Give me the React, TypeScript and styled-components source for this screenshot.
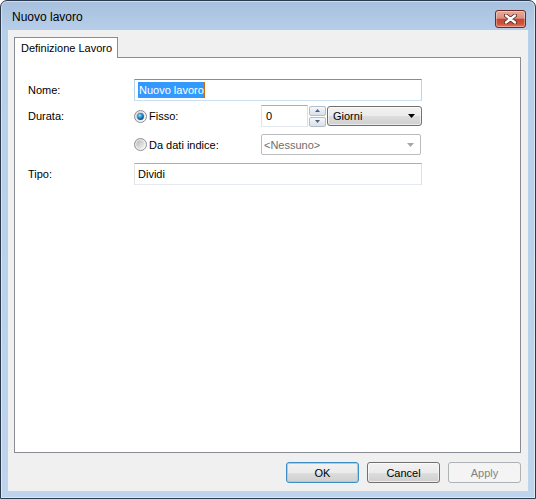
import React, { useId } from "react";
import styled, { createGlobalStyle } from "styled-components";

const GlobalStyle = createGlobalStyle`
  html, body {
    margin: 0;
    padding: 0;
    background: #ffffff;
    overflow: hidden;
  }
  * {
    box-sizing: border-box;
  }
`;

const Window = styled.div`
  width: 536px;
  height: 499px;
  display: flex;
  flex-direction: column;
  border: 1px solid #2b3a4c;
  border-radius: 7px 7px 0 0;
  background: linear-gradient(to bottom, #a6c0dd 0px, #b7cfe9 30px, #bdd4ec 100%);
  box-shadow: inset 0 0 0 1px rgba(255, 255, 255, 0.45);
  font-family: "Liberation Sans", Arial, sans-serif;
  font-size: 11px;
  color: #000;
`;

const TitleBar = styled.div`
  height: 29px;
  flex: none;
  display: flex;
  align-items: flex-start;
  justify-content: space-between;
`;

const Title = styled.div`
  padding: 9px 0 0 11px;
  font-size: 12px;
  line-height: 14px;
  color: #000;
`;

const CloseButton = styled.button`
  margin: 9px 9px 0 0;
  width: 31px;
  height: 18px;
  padding: 0;
  display: flex;
  align-items: center;
  justify-content: center;
  border: 1px solid #6a2a24;
  border-radius: 3px;
  background: linear-gradient(
    to bottom,
    #e9a999 0%,
    #dc8f7f 45%,
    #c5472f 52%,
    #cd543c 80%,
    #e27c5c 100%
  );
  box-shadow: inset 0 0 0 1px rgba(255, 255, 255, 0.35);
`;

const Body = styled.div`
  flex: 1;
  display: flex;
  padding: 0 7px 7px 7px;
`;

const Client = styled.div`
  flex: 1;
  display: flex;
  flex-direction: column;
  background: #f0f0f0;
  padding: 7px 7px 8px 6px;
`;

const TabStrip = styled.div`
  display: flex;
  flex: none;
`;

const Tab = styled.div`
  position: relative;
  z-index: 1;
  width: 104px;
  height: 21px;
  margin-bottom: -1px;
  padding: 0 0 0 6px;
  line-height: 20px;
  background: #ffffff;
  border: 1px solid #898c95;
  border-bottom: none;
  white-space: nowrap;
`;

const Panel = styled.div`
  flex: 1;
  background: #ffffff;
  border: 1px solid #898c95;
  padding: 21px 0 0 13px;
`;

const Form = styled.div`
  display: flex;
  flex-direction: column;
  width: 394px;
`;

const Row = styled.div<{ $gap?: number }>`
  display: grid;
  grid-template-columns: 106px 288px;
  align-items: center;
  margin-top: ${(p) => p.$gap ?? 0}px;
`;

const Label = styled.div`
  line-height: 14px;
`;

const TextBox = styled.div<{ $focused?: boolean; $width?: number }>`
  width: ${(p) => p.$width ?? 288}px;
  height: 22px;
  display: flex;
  align-items: center;
  padding-left: ${(p) => (p.$focused ? 3 : 3)}px;
  background: #ffffff;
  border: 1px solid;
  border-color: ${(p) =>
    p.$focused
      ? "#5b98c4 #b9d6ec #c8e0f1 #b9d6ec"
      : "#abadb3 #dbdfe6 #e3e9ef #e2e3ea"};
  white-space: nowrap;
`;

const Selected = styled.span`
  background: #3399ff;
  color: #ffffff;
  padding: 1px 0 1px 1px;
  border-right: 1px solid #cf6a10;
  line-height: 14px;
`;

const OptionLine = styled.div`
  display: flex;
  align-items: center;
`;

const RadioLabel = styled.label`
  width: 127px;
  display: flex;
  align-items: center;
  gap: 2px;
  line-height: 14px;
`;

const Spinner = styled.div`
  width: 17px;
  height: 21px;
  margin-left: 1px;
  display: flex;
  flex-direction: column;
  gap: 1px;
`;

const SpinButton = styled.div`
  flex: 1;
  display: flex;
  align-items: center;
  justify-content: center;
  border: 1px solid #b4bdc8;
  border-radius: 2px;
  background: linear-gradient(to bottom, #f6f8fa 0%, #e7ebf0 50%, #dbe1e8 100%);
`;

const Combo = styled.div<{ $disabled?: boolean; $width: number }>`
  width: ${(p) => p.$width}px;
  height: ${(p) => (p.$disabled ? 21 : 20)}px;
  margin-left: ${(p) => (p.$disabled ? 0 : 1)}px;
  display: flex;
  align-items: center;
  justify-content: space-between;
  padding: 0 6px 0 ${(p) => (p.$disabled ? 2 : 5)}px;
  border: 1px solid ${(p) => (p.$disabled ? "#b9bcbf" : "#707070")};
  border-radius: ${(p) => (p.$disabled ? 2 : 3)}px;
  color: ${(p) => (p.$disabled ? "#6d6d6d" : "#000")};
  background: ${(p) =>
    p.$disabled
      ? "#ffffff"
      : "linear-gradient(to bottom, #f2f2f2 0%, #ebebeb 50%, #dddddd 51%, #cfcfcf 100%)"};
  box-shadow: ${(p) =>
    p.$disabled ? "none" : "inset 0 0 0 1px rgba(255, 255, 255, 0.6)"};
`;

const ButtonBar = styled.div`
  flex: none;
  display: flex;
  justify-content: flex-end;
  gap: 8px;
  margin-top: 9px;
`;

const DialogButton = styled.button<{ $variant?: "default" | "disabled" }>`
  width: 73px;
  height: 21px;
  padding: 0;
  font-family: "Liberation Sans", Arial, sans-serif;
  font-size: 11px;
  border-radius: 3px;
  border: 1px solid
    ${(p) =>
      p.$variant === "default"
        ? "#3c8fc4"
        : p.$variant === "disabled"
        ? "#adb2b5"
        : "#707070"};
  color: ${(p) => (p.$variant === "disabled" ? "#838383" : "#000")};
  background: ${(p) =>
    p.$variant === "disabled"
      ? "#f4f4f4"
      : "linear-gradient(to bottom, #f2f2f2 0%, #ebebeb 50%, #dddddd 51%, #cfcfcf 100%)"};
  box-shadow: ${(p) =>
    p.$variant === "default"
      ? "inset 0 0 0 1px #7fdcfa"
      : p.$variant === "disabled"
      ? "none"
      : "inset 0 0 0 1px rgba(255, 255, 255, 0.6)"};
`;

const CloseGlyph = () => (
  <svg width="13" height="10" viewBox="0 0 13 10">
    <path
      d="M2 1.5 L11 8.5 M11 1.5 L2 8.5"
      stroke="#4e2622"
      strokeWidth="4"
      strokeLinecap="round"
    />
    <path
      d="M2 1.5 L11 8.5 M11 1.5 L2 8.5"
      stroke="#ffffff"
      strokeWidth="2.4"
      strokeLinecap="round"
    />
  </svg>
);

const RadioIcon: React.FC<{ checked?: boolean }> = ({ checked }) => {
  const id = useId().replace(/:/g, "");
  return (
    <svg width="13" height="13" viewBox="0 0 13 13">
      <defs>
        <linearGradient id={`${id}ring`} x1="0" y1="0" x2="1" y2="1">
          <stop offset="0" stopColor="#dcdcdc" />
          <stop offset="1" stopColor="#ffffff" />
        </linearGradient>
        <linearGradient id={`${id}inner`} x1="0" y1="0" x2="1" y2="1">
          <stop offset="0" stopColor="#b9b9b9" />
          <stop offset="1" stopColor="#f5f5f5" />
        </linearGradient>
        <radialGradient id={`${id}dot`} cx="0.4" cy="0.35" r="0.7">
          <stop offset="0" stopColor="#a8e6ff" />
          <stop offset="0.45" stopColor="#2c8fd4" />
          <stop offset="1" stopColor="#0d3d73" />
        </radialGradient>
      </defs>
      <circle
        cx="6.5"
        cy="6.5"
        r="6"
        fill={`url(#${id}ring)`}
        stroke="#8c8e90"
        strokeWidth="1"
      />
      <circle cx="6.5" cy="6.5" r="4.2" fill={`url(#${id}inner)`} />
      {checked && <circle cx="6.5" cy="6.5" r="3.4" fill={`url(#${id}dot)`} />}
    </svg>
  );
};

const Arrow: React.FC<{ color: string; w?: number; h?: number; up?: boolean }> = ({
  color,
  w = 7,
  h = 4,
  up,
}) => (
  <svg width={w} height={h} viewBox={`0 0 ${w} ${h}`}>
    <polygon
      points={up ? `0,${h} ${w},${h} ${w / 2},0` : `0,0 ${w},0 ${w / 2},${h}`}
      fill={color}
    />
  </svg>
);

export default function App() {
  return (
    <>
      <GlobalStyle />
      <Window>
        <TitleBar>
          <Title>Nuovo lavoro</Title>
          <CloseButton>
            <CloseGlyph />
          </CloseButton>
        </TitleBar>
        <Body>
          <Client>
            <TabStrip>
              <Tab>Definizione Lavoro</Tab>
            </TabStrip>
            <Panel>
              <Form>
                <Row>
                  <Label>Nome:</Label>
                  <TextBox $focused>
                    <Selected>Nuovo lavoro</Selected>
                  </TextBox>
                </Row>
                <Row $gap={4}>
                  <Label>Durata:</Label>
                  <OptionLine>
                    <RadioLabel>
                      <RadioIcon checked />
                      Fisso:
                    </RadioLabel>
                    <TextBox $width={47} style={{ paddingLeft: 4 }}>
                      0
                    </TextBox>
                    <Spinner>
                      <SpinButton>
                        <Arrow color="#4d6185" w={5} h={3} up />
                      </SpinButton>
                      <SpinButton>
                        <Arrow color="#4d6185" w={5} h={3} />
                      </SpinButton>
                    </Spinner>
                    <Combo $width={95}>
                      <span>Giorni</span>
                      <Arrow color="#000" />
                    </Combo>
                  </OptionLine>
                </Row>
                <Row $gap={7}>
                  <Label />
                  <OptionLine>
                    <RadioLabel>
                      <RadioIcon />
                      Da dati indice:
                    </RadioLabel>
                    <Combo $width={160} $disabled>
                      <span>&lt;Nessuno&gt;</span>
                      <Arrow color="#a6a6a6" />
                    </Combo>
                  </OptionLine>
                </Row>
                <Row $gap={8}>
                  <Label>Tipo:</Label>
                  <TextBox>Dividi</TextBox>
                </Row>
              </Form>
            </Panel>
            <ButtonBar>
              <DialogButton $variant="default">OK</DialogButton>
              <DialogButton>Cancel</DialogButton>
              <DialogButton $variant="disabled">Apply</DialogButton>
            </ButtonBar>
          </Client>
        </Body>
      </Window>
    </>
  );
}
